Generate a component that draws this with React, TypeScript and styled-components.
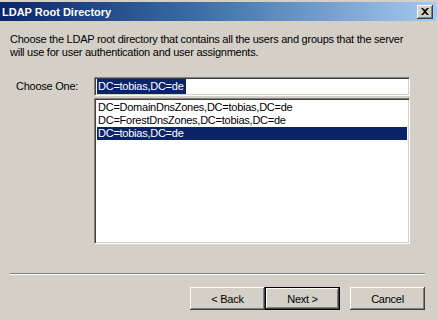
import styled, { createGlobalStyle } from "styled-components";

const GlobalStyle = createGlobalStyle`
  html, body {
    margin: 0;
    padding: 0;
    background: #d4d0c8;
  }
  body {
    font-family: "Liberation Sans", Arial, sans-serif;
    font-size: 11px;
    letter-spacing: -0.25px;
    color: #000;
  }
`;

const Window = styled.div`
  width: 437px;
  height: 320px;
  background: #d4d0c8;
  display: flex;
  flex-direction: column;
  overflow: hidden;
`;

const TitleBar = styled.div`
  height: 19px;
  margin-top: 2px;
  padding: 0 4px 0 2px;
  display: flex;
  align-items: center;
  justify-content: space-between;
  background: linear-gradient(to right, #0a246a 0%, #3a6ea5 45%, #a6caf0 100%);
`;

const Title = styled.span`
  color: #fff;
  font-weight: bold;
  font-size: 11px;
  letter-spacing: 0;
`;

const CloseButton = styled.div`
  width: 16px;
  height: 14px;
  background: #d4d0c8;
  box-shadow: inset -1px -1px #404040, inset 1px 1px #fff, inset -2px -2px #808080;
  display: flex;
  align-items: center;
  justify-content: center;
`;

const Body = styled.div`
  flex: 1;
  display: flex;
  flex-direction: column;
  padding: 12px 7px 0 10px;
`;

const Description = styled.p`
  margin: 0;
  line-height: 13px;
  white-space: nowrap;
`;

const ChooseRow = styled.div`
  display: flex;
  margin-top: 18px;
`;

const Label = styled.label`
  width: 84px;
  padding: 3px 0 0 6px;
  box-sizing: border-box;
`;

const Fields = styled.div`
  width: 316px;
  display: flex;
  flex-direction: column;
  gap: 2px;
`;

const sunken = `
  box-sizing: border-box;
  background: #fff;
  border-style: solid;
  border-width: 1px;
  border-color: #808080 #fff #fff #808080;
  box-shadow: inset 1px 1px #404040, inset -1px -1px #d4d0c8;
`;

const Input = styled.div`
  ${sunken}
  height: 19px;
  padding: 1px 0 0 2px;
`;

const Selected = styled.span`
  background: #0a246a;
  color: #fff;
  display: inline-block;
  line-height: 15px;
  padding: 0 2px 0 1px;
`;

const ListBox = styled.div`
  ${sunken}
  height: 146px;
  padding: 2px 2px;
`;

const Item = styled.div<{ $active?: boolean }>`
  height: 13px;
  line-height: 13px;
  padding-left: 1px;
  background: ${(p) => (p.$active ? "#0a246a" : "transparent")};
  color: ${(p) => (p.$active ? "#fff" : "#000")};
  white-space: nowrap;
`;

const Separator = styled.div`
  margin-top: 29px;
  width: 415px;
  height: 0;
  border-top: 1px solid #808080;
  border-bottom: 1px solid #fff;
`;

const ButtonRow = styled.div`
  display: flex;
  justify-content: flex-end;
  margin-top: 12px;
  padding-right: 5px;
`;

const Button = styled.button<{ $default?: boolean; $gap?: number }>`
  width: 75px;
  height: 23px;
  margin-left: ${(p) => p.$gap ?? 0}px;
  font-family: "Liberation Sans", Arial, sans-serif;
  font-size: 11px;
  letter-spacing: -0.25px;
  color: #000;
  background: #d4d0c8;
  border: ${(p) => (p.$default ? "1px solid #000" : "none")};
  box-sizing: border-box;
  padding: 0;
  box-shadow: inset -1px -1px #404040, inset 1px 1px #fff, inset -2px -2px #808080;
`;

const listItems = [
  "DC=DomainDnsZones,DC=tobias,DC=de",
  "DC=ForestDnsZones,DC=tobias,DC=de",
  "DC=tobias,DC=de",
];

export default function App() {
  return (
    <>
      <GlobalStyle />
      <Window>
        <TitleBar>
          <Title>LDAP Root Directory</Title>
          <CloseButton>
            <svg width="8" height="7" viewBox="0 0 8 7">
              <path d="M0 0h2l2 2 2-2h2L5 3.5 8 7H6L4 5 2 7H0l3-3.5z" fill="#000" />
            </svg>
          </CloseButton>
        </TitleBar>
        <Body>
          <Description>
            Choose the LDAP root directory that contains all the users and groups that the server
            <br />
            will use for user authentication and user assignments.
          </Description>
          <ChooseRow>
            <Label>Choose One:</Label>
            <Fields>
              <Input>
                <Selected>DC=tobias,DC=de</Selected>
              </Input>
              <ListBox>
                {listItems.map((item, i) => (
                  <Item key={item} $active={i === 2}>
                    {item}
                  </Item>
                ))}
              </ListBox>
            </Fields>
          </ChooseRow>
          <Separator />
          <ButtonRow>
            <Button>&lt; Back</Button>
            <Button $default>Next &gt;</Button>
            <Button $gap={10}>Cancel</Button>
          </ButtonRow>
        </Body>
      </Window>
    </>
  );
}
